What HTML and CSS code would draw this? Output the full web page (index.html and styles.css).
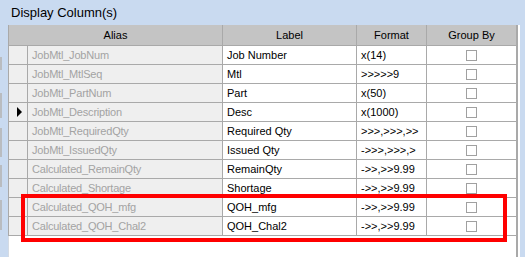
FILE: index.html
```html
<!DOCTYPE html>
<html>
<head>
<meta charset="utf-8">
<link rel="stylesheet" href="styles.css">
</head>
<body>
<div class="panel">
  <div class="title">Display Column(s)</div>
  <div class="main">
    <div class="edge">
      <span class="stub s1"></span>
      <span class="stub s2"></span>
      <span class="stub s3"></span>
      <span class="stub s4"></span>
      <span class="stub s5"></span>
    </div>
    <div class="gridbox">
      <div class="grid">
        <div class="hd span2">Alias</div>
        <div class="hd">Label</div>
        <div class="hd">Format</div>
        <div class="hd">Group By</div>

        <div class="rh"></div><div class="alias">JobMtl_JobNum</div><div class="cell">Job Number</div><div class="cell">x(14)</div><div class="cell chk"><span class="box"></span></div>
        <div class="rh"></div><div class="alias">JobMtl_MtlSeq</div><div class="cell">Mtl</div><div class="cell">&gt;&gt;&gt;&gt;&gt;9</div><div class="cell chk"><span class="box"></span></div>
        <div class="rh"></div><div class="alias">JobMtl_PartNum</div><div class="cell">Part</div><div class="cell">x(50)</div><div class="cell chk"><span class="box"></span></div>
        <div class="rh"><span class="arrow"></span></div><div class="alias">JobMtl_Description</div><div class="cell">Desc</div><div class="cell">x(1000)</div><div class="cell chk"><span class="box"></span></div>
        <div class="rh"></div><div class="alias">JobMtl_RequiredQty</div><div class="cell">Required Qty</div><div class="cell">&gt;&gt;&gt;,&gt;&gt;&gt;,&gt;&gt;</div><div class="cell chk"><span class="box"></span></div>
        <div class="rh"></div><div class="alias">JobMtl_IssuedQty</div><div class="cell">Issued Qty</div><div class="cell">-&gt;&gt;&gt;,&gt;&gt;&gt;,&gt;</div><div class="cell chk"><span class="box"></span></div>
        <div class="rh"></div><div class="alias">Calculated_RemainQty</div><div class="cell">RemainQty</div><div class="cell">-&gt;&gt;,&gt;&gt;9.99</div><div class="cell chk"><span class="box"></span></div>
        <div class="rh"></div><div class="alias">Calculated_Shortage</div><div class="cell">Shortage</div><div class="cell">-&gt;&gt;,&gt;&gt;9.99</div><div class="cell chk"><span class="box"></span></div>
        <div class="rh"></div><div class="alias">Calculated_QOH_mfg</div><div class="cell">QOH_mfg</div><div class="cell">-&gt;&gt;,&gt;&gt;9.99</div><div class="cell chk"><span class="box"></span></div>
        <div class="rh"></div><div class="alias">Calculated_QOH_Chal2</div><div class="cell">QOH_Chal2</div><div class="cell">-&gt;&gt;,&gt;&gt;9.99</div><div class="cell chk"><span class="box"></span></div>
      </div>
      <div class="filler"></div>
    </div>
  </div>
  <div class="highlight"></div>
</div>
</body>
</html>
```

FILE: styles.css
```css
html, body {
  margin: 0;
  padding: 0;
}
body {
  width: 525px;
  height: 257px;
  overflow: hidden;
  background: #c9daf0;
  font-family: "Liberation Sans", Arial, sans-serif;
  font-size: 11px;
  color: #000;
}
.panel {
  position: relative;
  display: flex;
  flex-direction: column;
  height: 257px;
}
.title {
  height: 25px;
  box-sizing: border-box;
  padding-top: 1px;
  line-height: 24px;
  padding-left: 11px;
  font-size: 13px;
  color: #000;
}
.main {
  display: flex;
  flex: 1;
  min-height: 0;
}
.edge {
  width: 8px;
  display: flex;
  flex-direction: column;
}
.stub {
  display: block;
  width: 2px;
  background: #b9bcc0;
}
.s1 { margin-top: 32px; height: 13px; }
.s2 { margin-top: 23px; height: 25px; }
.s3 { margin-top: 10px; height: 29px; }
.s4 { margin-top: 8px; height: 22px; }
.s5 { margin-top: 13px; height: 30px; }
.gridbox {
  width: 512px;
  background: #fff;
  display: flex;
  flex-direction: column;
}
.grid {
  width: 510px;
  box-sizing: border-box;
  display: grid;
  grid-template-columns: 18px 194px 133px 69px 89px;
  grid-template-rows: 20px repeat(10, 18px);
  gap: 1px;
  padding: 0 2px 1px 1px;
  background: #a9a9a9;
}
.filler {
  flex: 1;
  width: 510px;
  box-sizing: border-box;
  border-right: 2px solid #a9a9a9;
  border-left: 1px solid #d4dbe4;
}
.hd {
  background: #c4c4c4;
  text-align: center;
  line-height: 20px;
  white-space: nowrap;
}
.span2 {
  grid-column: span 2;
}
.rh {
  background: #efefef;
  display: flex;
  align-items: center;
  justify-content: center;
}
.arrow {
  width: 0;
  height: 0;
  border-top: 5px solid transparent;
  border-bottom: 5px solid transparent;
  border-left: 5px solid #000;
  margin-left: 2px;
}
.alias {
  background: #efefef;
  color: #a3a3a3;
  line-height: 18px;
  padding-left: 4px;
  white-space: nowrap;
  letter-spacing: -0.2px;
}
.cell {
  background: #fff;
  line-height: 18px;
  padding-left: 4px;
  white-space: nowrap;
}
.chk {
  padding-left: 0;
  display: flex;
  align-items: center;
  justify-content: center;
}
.box {
  display: block;
  width: 9px;
  height: 9px;
  border: 1px solid #a0a0a0;
  background: #fff;
}
.highlight {
  position: absolute;
  left: 21px;
  top: 194px;
  width: 478px;
  height: 40px;
  border: 4px solid #ff0000;
}
```
